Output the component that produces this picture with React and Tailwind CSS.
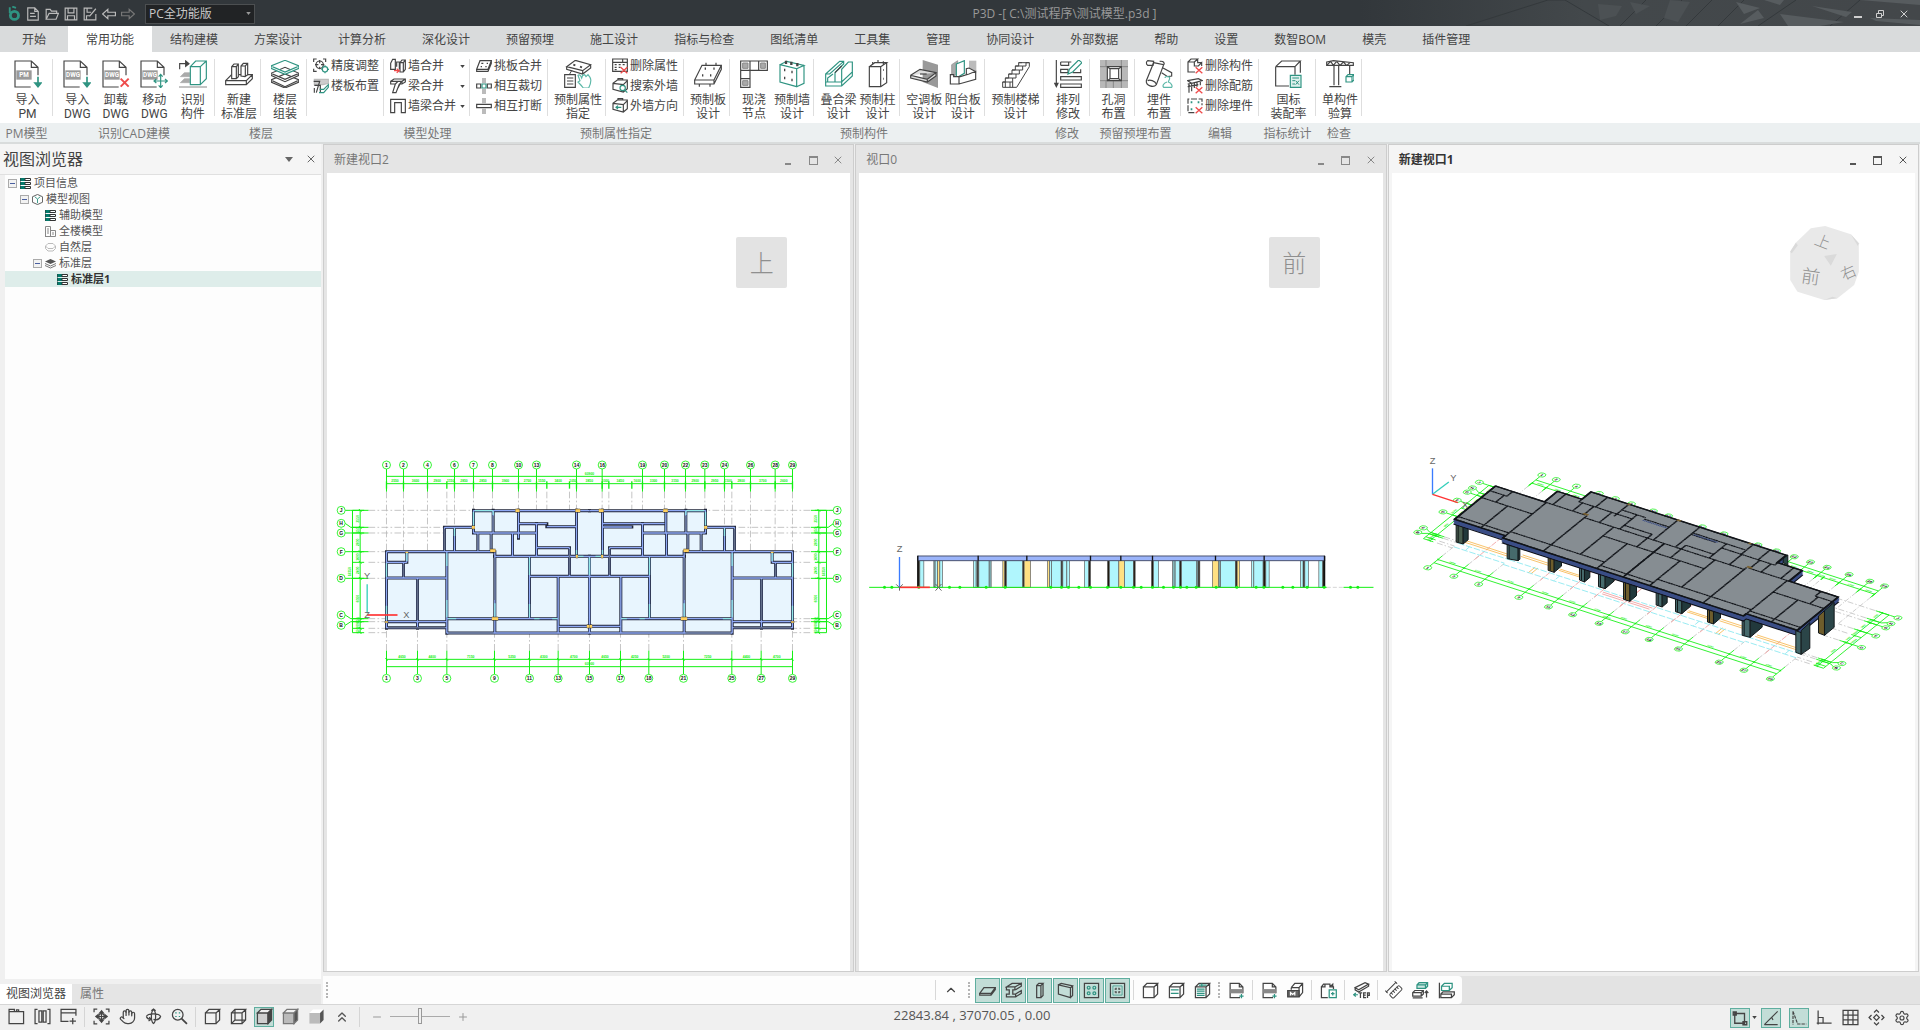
import React, { useState } from "react";
import {
  ChevronUp,
  ChevronsUp,
  Hand,
  Minus,
  Plus,
  RulerDimensionLine,
  Settings,
  X,
} from "lucide-react";

const INK = "#444444";
const TEAL = "#2f9482";
const RED = "#ee4b4b";

/* ---------- icons: large ones on an 84 grid, small ones on 48 ---------- */

const Big = ({ children }) => (
  <svg viewBox="0 0 84 84" className="size-7 shrink-0" fill="none" stroke={INK} strokeWidth="3.5">
    {children}
  </svg>
);

const Small = ({ children, className = "size-4" }) => (
  <svg viewBox="0 0 48 48" className={`${className} shrink-0`} fill="none" stroke={INK} strokeWidth="3.5">
    {children}
  </svg>
);

const Sheet = ({ label, children }) => (
  <Big>
    <path d="M50 81H3V3H52L72 22V46M52 3V22H72" />
    <rect x="7" y="31" width="46" height="28" fill="#9a9a9a" stroke="none" />
    <text x="30" y="52" textAnchor="middle" fontSize="19" fontWeight="700" fill="#fff" stroke="none" className="font-['Roboto',sans-serif]">
      {label}
    </text>
    {children}
  </Big>
);

const downArrow = (
  <path d="M72 50V79M63 69L72 80L81 69Z" stroke={TEAL} fill={TEAL} strokeWidth="5" />
);

const bigIcons = {
  importPm: <Sheet label="PM">{downArrow}</Sheet>,
  importDwg: <Sheet label="DWG">{downArrow}</Sheet>,
  unloadDwg: (
    <Sheet label="DWG">
      <path d="M56 56L80 80M80 56L56 80" stroke={RED} strokeWidth="6" />
    </Sheet>
  ),
  moveDwg: (
    <Sheet label="DWG">
      <path d="M62 44V82M43 63H81M56 50L62 43L68 50M56 76L62 83L68 76M49 57L42 63L49 69M75 57L82 63L75 69" stroke={TEAL} />
    </Sheet>
  ),
  recognise: (
    <Big>
      <path d="M2 28V11H24" />
      <path d="M20 3L30 11L20 19Z" fill={INK} />
      <path d="M4 50L16 38H32V50ZM4 68L16 56H32V68Z" fill="#aaa" stroke="#aaa" strokeWidth="2" />
      <path d="M34 20H64V74H34ZM34 20L50 3H82L64 20M82 3V56L64 74" fill="#fff" stroke={TEAL} />
      <path d="M0 81H84" stroke="#888" strokeWidth="3" />
    </Big>
  ),
  newFloor: (
    <Big>
      <path d="M2 62L20 44H82L64 62ZM2 62V74H64L82 56V44M64 62V74" />
      <path d="M20 56V20L27 12H40V50L34 56ZM20 20H34L40 12M34 20V56M48 48V18L55 10H68V44L60 50ZM48 18H61L68 10M61 18V48" fill="#fff" />
    </Big>
  ),
  stackFloor: (
    <Big>
      <path d="M0 60L42 42L84 60L42 80ZM0 60V66L42 84L84 66V60" fill="#fff" />
      <path d="M0 40L42 22L84 40L42 58ZM0 40V46L42 65L84 46V40" fill="#fff" />
      <path d="M0 18L42 1L84 18L42 36ZM0 18V25L42 43L84 25V18" stroke={TEAL} fill="#fff" />
    </Big>
  ),
  assign: (
    <Big>
      <path d="M8 20L34 1L80 14L56 32ZM8 20V28L56 42L80 24V14M56 32V42" />
      <path d="M28 14L34 16M48 20L54 22" strokeWidth="6" />
      <path d="M24 30L16 44" strokeWidth="3" />
      <path d="M2 44H34V82H2ZM9 54H28M9 63H28M9 72H28" />
      <path d="M42 46C46 42 50 46 53 54L56 46L62 44L66 50L72 44L78 52C84 62 80 72 74 84H58C52 76 46 70 42 66L48 62Z" stroke="#5cb8a8" fill="#fff" />
    </Big>
  ),
  slab: (
    <Big>
      <path d="M2 60L24 16H82L60 60ZM2 60V72H60L82 28V16M60 60V72" />
      <path d="M32 26H36M58 26H62M24 46H28M48 46H52" strokeWidth="7" />
      <path d="M36 16V8M66 16V8M16 72V80M48 72V80" />
    </Big>
  ),
  joint: (
    <Big>
      <path d="M2 3H82V31H30V82H2ZM2 31H30V3M56 3V31M2 56H30" />
      <path d="M8 9H24V25H8ZM62 9H76V25H62ZM8 62H24V76H8Z" fill="#aaa" stroke="#888" strokeWidth="3" />
    </Big>
  ),
  wall: (
    <Big>
      <path d="M6 14L56 26V80L6 66ZM6 14L26 4L78 16L56 26M78 16V70L56 80" stroke={TEAL} />
      <path d="M24 12V2M40 15V5M58 19V9M18 30H22M40 36H44M18 54H22M40 60H44" strokeWidth="7" />
    </Big>
  ),
  beam: (
    <Big>
      <path d="M2 42L44 4H56V12L30 38V66H2ZM30 66H50L82 36V6H70L50 28V66M2 42H14L56 4M8 66V54L24 42" stroke={TEAL} />
      <path d="M2 66V78H50L82 48V36M50 66V78" stroke={TEAL} />
      <path d="M30 38L50 18" />
    </Big>
  ),
  column: (
    <Big>
      <path d="M16 20H50V80H16ZM16 20L32 8H68L50 20M68 8V68L50 80M26 14V6M42 8V0M58 14V4" />
      <path d="M58 30H60M58 56H60" strokeWidth="6" />
    </Big>
  ),
  acSlab: (
    <Big>
      <path d="M38 0L84 14V84L38 66Z" fill="#999" stroke="none" />
      <path d="M2 46L30 28L78 38L52 58ZM2 46V54L52 66L78 48V38M52 58V66" fill="#ddd" />
      <path d="M30 42H50" />
    </Big>
  ),
  balcony: (
    <Big>
      <path d="M8 14L26 2V40L8 54Z" fill="#aaa" stroke="#888" strokeWidth="2" />
      <path d="M60 2H82V40H60Z" fill="#bbb" stroke="none" />
      <path d="M22 12L46 2V40L22 54Z" stroke={TEAL} fill="#fff" />
      <path d="M4 44V72H30L80 58V34L60 42L34 50H14V44ZM30 72V50M52 44V26L60 24L78 34" fill="#fff" />
    </Big>
  ),
  stairs: (
    <Big>
      <path d="M2 82V66H10V54H20V42H30V30H40V18H50V8H60" strokeWidth="3" />
      <path d="M24 82V66H32V54H42V42H52V30H62V18H72V8H82V20L44 82" strokeWidth="3" />
      <path d="M2 66H24M10 54H32M20 42H42M30 30H52M40 18H62M50 8H82M2 82H44M10 66V82M32 66V82" strokeWidth="3" />
    </Big>
  ),
  arrange: (
    <Big>
      <path d="M7 0V76M2 70L7 80L12 70ZM20 6H52M20 16H44V6M20 6V16M20 28H42V38H20ZM56 38H80V28M20 50H82V60H20ZM20 72H82V82H20Z" />
      <path d="M42 42L46 28L74 0L84 8L56 36Z" stroke={TEAL} fill="#fff" />
    </Big>
  ),
  opening: (
    <Big>
      <path d="M0 0H84V84H0Z" fill="#b8b8b8" stroke="none" />
      <path d="M18 0V20M64 0V20M0 20H84M0 62H84M18 62V84M64 62V84M40 62V84" stroke="#888" strokeWidth="3" />
      <path d="M22 20H64V62H22Z" fill="#fff" />
      <path d="M30 26H56V56H30ZM22 20L30 26M64 20L56 26M22 62L30 56M64 62L56 56" />
    </Big>
  ),
  embed: (
    <Big>
      <path d="M26 8L56 14L34 74C26 84 2 78 4 62Z" fill="#fff" />
      <path d="M8 2L26 4L24 16L8 16C2 12 4 4 8 2ZM54 24L80 38V48L68 50L50 38M44 4C56 2 60 10 56 14" />
      <path d="M8 62C14 58 30 62 34 72" />
      <path d="M60 54C60 48 74 48 74 54C74 60 70 62 70 66C82 70 82 80 80 82H56C52 78 54 70 66 66" stroke="#5cb8a8" />
    </Big>
  ),
  rate: (
    <Big>
      <path d="M2 20H60V44M2 20V78H42M2 20L20 3H76L60 20M76 3V38" />
      <path d="M46 46H78V82H46Z" stroke={TEAL} fill="#dff1ed" />
      <path d="M52 54H72M52 62H60M52 72H60M62 62L72 74M72 62L62 74" stroke={TEAL} strokeWidth="3" />
    </Big>
  ),
  crane: (
    <Big>
      <path d="M2 6L22 2L82 8V16H2ZM2 16L14 4L22 16L32 4L42 16L52 6L62 16L72 8M24 18V76M38 18V76M10 80H46" />
      <path d="M71 16V44" stroke={INK} />
      <path d="M60 50L66 44H84V60L78 66H60ZM60 50H78V66M78 50L84 44" stroke={TEAL} />
    </Big>
  ),
};

const cross = <path d="M26 28L46 46M46 28L26 46" stroke={RED} strokeWidth="4" />;

const smallIcons = {
  precision: (
    <Small>
      <path d="M2 12V3H11M30 3H38V12M2 32V40H11M20 6V16M20 26V34M6 20H16M24 20H34" />
      <circle cx="20" cy="20" r="11" />
      <circle cx="36" cy="34" r="8" stroke={TEAL} />
      <path d="M36 22V27M36 41V46M25 34H28M44 34H48" stroke={TEAL} />
    </Small>
  ),
  floorLay: (
    <Small>
      <path d="M4 4H46V16L30 20H4Z" fill="#ccc" stroke="#bbb" />
      <path d="M2 10H20L10 44M4 22H22V44M4 30V44" />
      <path d="M20 34H32L46 20V28L32 44H18" stroke={TEAL} />
    </Small>
  ),
  wallMerge: (
    <Small>
      <path d="M2 16L8 4H16V34H2ZM20 26V12H28V34M30 14L36 6H46V34L40 42H30ZM30 14H40V42M40 14L46 6" />
      <path d="M12 38H28M20 32L28 38L20 44" stroke={RED} />
    </Small>
  ),
  beamMerge: (
    <Small>
      <path d="M2 10L12 3H46V12L36 18H28L18 44H8L16 18H2ZM2 10H36L46 3M16 18L24 10M24 30L34 10M36 10V18" />
    </Small>
  ),
  wallBeam: (
    <Small>
      <path d="M2 44V4H46V44H34V14H14V44Z" />
    </Small>
  ),
  slabMerge: (
    <Small>
      <path d="M2 34L12 8H46L36 34ZM2 34V40H36L46 16V8" />
      <path d="M16 16H22M32 16H36M14 26H18M28 26H32" />
    </Small>
  ),
  cut: (
    <Small>
      <path d="M18 0H30V16H18ZM18 32H30V48H18Z" fill="#bbb" stroke="none" />
      <path d="M2 18H14V30H2ZM34 18H46V30H34Z" />
      <path d="M18 18H30V30H18Z" stroke={TEAL} />
    </Small>
  ),
  split: (
    <Small>
      <path d="M18 0H30V16H18ZM18 32H30V48H18Z" fill="#bbb" stroke="none" />
      <path d="M2 19H46V29H2Z" />
    </Small>
  ),
  delProp: (
    <Small>
      <path d="M2 3H46V40H2ZM2 13H46M32 3V13" />
      <path d="M8 20H14M20 20H26M32 20H38M8 28H14M20 28H26M8 35H14" />
      {cross}
    </Small>
  ),
  findWall: (
    <Small>
      <path d="M3 16L16 6H46V32L34 42L3 34ZM3 16L34 20L46 8M34 20V42M18 6V2H32V6" />
      <circle cx="32" cy="30" r="8" stroke={TEAL} fill="#fff" />
      <path d="M38 36L46 44" stroke={TEAL} />
    </Small>
  ),
  wallDir: (
    <Small>
      <path d="M3 16L16 6H46V32L34 42L3 34ZM3 16L34 20L46 8M34 20V42M18 6V2H32V6" />
      <path d="M12 28H28M18 23L12 28L18 33" stroke={TEAL} />
    </Small>
  ),
  delMember: (
    <Small>
      <path d="M24 42H3V12H22V24H34L44 14V24M3 12L12 3H32L22 12M32 3V14H44" />
      {cross}
    </Small>
  ),
  delRebar: (
    <Small>
      <path d="M2 8L34 2L46 8L14 16ZM2 18L34 12M2 26L34 20M6 16V44M14 16V40M22 14V30M30 12V26M40 8V22" />
      {cross}
    </Small>
  ),
  delEmbed: (
    <Small>
      <path d="M22 44H3V3H45V22" strokeDasharray="18 5" />
      <path d="M11 13H16M32 13H37M11 34H16" stroke={TEAL} strokeWidth="6" />
      {cross}
    </Small>
  ),
};

/* ---------- ribbon ---------- */

const tabs = [
  "常用功能", "结构建模", "方案设计", "计算分析", "深化设计", "预留预埋", "施工设计", "指标与检查", "图纸清单",
  "工具集", "管理", "协同设计", "外部数据", "帮助", "设置", "数智BOM", "模壳", "插件管理",
];

const ribbonGroups = [
  {
    title: "PM模型",
    cells: [{ w: "w-[53px]", big: [["importPm", "导入", "PM"]] }],
  },
  {
    title: "识别CAD建模",
    cells: [
      {
        w: "w-[162px]",
        big: [
          ["importDwg", "导入", "DWG"],
          ["unloadDwg", "卸载", "DWG"],
          ["moveDwg", "移动", "DWG"],
          ["recognise", "识别", "构件"],
        ],
      },
    ],
  },
  {
    title: "楼层",
    cells: [
      { w: "w-[46px]", big: [["newFloor", "新建", "标准层"]] },
      { w: "w-[46px]", big: [["stackFloor", "楼层", "组装"]] },
    ],
  },
  {
    title: "模型处理",
    cells: [
      { w: "w-[77px]", rows: [["precision", "精度调整"], ["floorLay", "楼板布置"]] },
      {
        w: "w-[86px]",
        menu: true,
        rows: [["wallMerge", "墙合并"], ["beamMerge", "梁合并"], ["wallBeam", "墙梁合并"]],
      },
      { w: "w-[78px]", rows: [["slabMerge", "挑板合并"], ["cut", "相互裁切"], ["split", "相互打断"]] },
    ],
  },
  {
    title: "预制属性指定",
    cells: [
      { w: "w-[58px]", big: [["assign", "预制属性", "指定"]] },
      { w: "w-[78px]", rows: [["delProp", "删除属性"], ["findWall", "搜索外墙"], ["wallDir", "外墙方向"]] },
    ],
  },
  {
    title: "预制构件",
    cells: [
      { w: "w-[46px]", big: [["slab", "预制板", "设计"]] },
      { w: "w-[84px]", big: [["joint", "现浇", "节点"], ["wall", "预制墙", "设计"]] },
      { w: "w-[86px]", big: [["beam", "叠合梁", "设计"], ["column", "预制柱", "设计"]] },
      { w: "w-[85px]", big: [["acSlab", "空调板", "设计"], ["balcony", "阳台板", "设计"]] },
      { w: "w-[59px]", big: [["stairs", "预制楼梯", "设计"]] },
    ],
  },
  { title: "修改", cells: [{ w: "w-[46px]", big: [["arrange", "排列", "修改"]] }] },
  {
    title: "预留预埋布置",
    cells: [
      { w: "w-[45px]", big: [["opening", "孔洞", "布置"]] },
      { w: "w-[46px]", big: [["embed", "埋件", "布置"]] },
    ],
  },
  {
    title: "编辑",
    cells: [{ w: "w-[78px]", rows: [["delMember", "删除构件"], ["delRebar", "删除配筋"], ["delEmbed", "删除埋件"]] }],
  },
  { title: "指标统计", cells: [{ w: "w-[57px]", big: [["rate", "国标", "装配率"]] }] },
  { title: "检查", cells: [{ w: "w-[46px]", big: [["crane", "单构件", "验算"]] }] },
];

const RibbonCell = ({ cell }) => (
  <div className={`${cell.w} flex shrink-0`}>
    {cell.big ? (
      <div className="flex flex-1 pl-[5px] pr-0.5">
        {cell.big.map(([icon, top, bottom]) => (
          <button
            key={icon}
            className="flex flex-1 flex-col items-center gap-[5px] whitespace-nowrap pt-2 font-['Roboto','Noto_Sans_CJK_SC',sans-serif] leading-[14px]"
          >
            {bigIcons[icon]}
            <span>
              {top}
              <br />
              {bottom}
            </span>
          </button>
        ))}
      </div>
    ) : (
      <div className="flex flex-1 flex-col pl-1.5 pt-1">
        {cell.rows.map(([icon, label]) => (
          <button key={icon} className="flex h-5 items-center gap-0.5 whitespace-nowrap pr-1">
            {smallIcons[icon]}
            {label}
            {cell.menu && (
              <svg viewBox="0 0 6 4" className="ml-auto h-[3px] w-[5px]">
                <path d="M0 0H6L3 4Z" fill={INK} />
              </svg>
            )}
          </button>
        ))}
      </div>
    )}
    <div className="my-[7px] w-px bg-[#dedede]" />
  </div>
);

const Ribbon = () => (
  <div className="flex shrink-0 border-b-2 border-[#d9dcdc] bg-white">
    {ribbonGroups.map((group) => (
      <section key={group.title} className="shrink-0">
        <div className="flex h-[71px]">
          {group.cells.map((cell, i) => (
            <RibbonCell key={i} cell={cell} />
          ))}
        </div>
        <h3 className="h-[19px] whitespace-nowrap bg-[#ecf0f1] text-center leading-[22px] text-[#777]">{group.title}</h3>
      </section>
    ))}
    <div className="flex flex-1 flex-col justify-end">
      <div className="h-[19px] bg-[#ecf0f1]" />
    </div>
  </div>
);

/* ---------- title bar ---------- */

const titleIcons = [
  ["新建", <path key="p" d="M6 3H30L42 15V45H6ZM30 3V15H42M14 22H30M14 32H34" />],
  ["打开", <path key="p" d="M4 42V8H18L22 14H40V22M4 42L14 22H46L38 42Z" />],
  ["保存", <path key="p" d="M4 4H44V44H4ZM14 4V20H34V4M12 44V30H36V44" />],
  ["另存为", <path key="p" d="M32 4H4V44H44V24M14 4V18H28M12 44V30H24M22 32L44 6" />],
  ["撤销", <path key="p" d="M2 24L20 8V18H46V30H20V40Z" />],
];

const TitleBar = () => (
  <header className="relative flex h-[26px] shrink-0 items-center overflow-hidden bg-[#32373b] pt-px text-[#999]">
    <svg viewBox="0 0 560 26" preserveAspectRatio="xMaxYMid slice" className="absolute right-0 top-0 h-full w-[560px]">
      <defs>
        <linearGradient id="sky" x1="0" x2="1">
          <stop offset="0" stopColor="#32373b" />
          <stop offset=".4" stopColor="#43484b" />
          <stop offset="1" stopColor="#43474a" />
        </linearGradient>
      </defs>
      <path d="M0 0H560V26H0Z" fill="url(#sky)" />
      <path d="M130 26L106 26L188 0H205L249 26M260 26L286 0M296 26L322 0M326 26L352 0M358 26L384 0M398 26L436 0M470 26L500 0" stroke="#34393c" fill="none" />
      <path d="M238 4L262 6L256 16L240 20ZM270 2L290 6L276 14ZM310 0L330 2L318 22L304 18Z" fill="#4c5154" />
      <path d="M376 2L400 8L384 14ZM398 10L404 18L380 24ZM420 14L484 22L460 26H428ZM452 6L492 12L486 17ZM404 0H424L420 5ZM510 18L560 20V25L516 21ZM500 0H560V5Z" fill="#575c5f" />
    </svg>
    <div className="relative flex items-center gap-[5px] pl-1.5">
      <svg viewBox="0 0 48 48" className="size-[15px]" fill="none" stroke={TEAL} strokeWidth="9">
        <circle cx="27" cy="30" r="13" />
        <path d="M12 4V22M20 2L32 6" strokeWidth="6" />
      </svg>
      {titleIcons.map(([label, path]) => (
        <button key={label} aria-label={label}>
          <svg viewBox="0 0 48 48" className="size-[14px]" fill="none" stroke="#bbb" strokeWidth="4">
            {path}
          </svg>
        </button>
      ))}
      <button aria-label="重做">
        <svg viewBox="0 0 48 48" className="size-[14px]" fill="none" stroke="#777" strokeWidth="4">
          <path d="M46 24L28 8V18H2V30H28V40Z" />
        </svg>
      </button>
    </div>
    <div className="relative ml-2.5">
      <select
        aria-label="功能版本"
        className="h-5 w-[110px] appearance-none border border-[#4c4f51] bg-[#212325] pl-[3px] text-xs leading-4 text-[#c8c8c8]"
      >
        <option>PC全功能版</option>
      </select>
      <svg viewBox="0 0 6 4" className="pointer-events-none absolute right-1 top-2 h-[3px] w-[5px]">
        <path d="M0 0H6L3 4Z" fill="#999" />
      </svg>
    </div>
    <h1 className="relative flex-1 pl-5 text-center">P3D -[ C:\测试程序\测试模型.p3d ]</h1>
    <div className="relative flex items-center gap-[14px] pr-2.5 text-[#d0d0d0]">
      <button aria-label="最小化" className="h-2 w-2 border-b-2" />
      <button aria-label="还原">
        <svg viewBox="0 0 8 8" className="size-2" fill="none" stroke="currentColor">
          <path d="M.5 3.5H5.5V7.5H.5ZM2.5 3V.5H7.5V5.5H6" />
        </svg>
      </button>
      <button aria-label="关闭">
        <X className="size-3" />
      </button>
    </div>
  </header>
);

/* ---------- left browser panel ---------- */

const Stack = () => (
  <svg viewBox="0 0 11 11" className="size-[11px]">
    <path d="M0 0H5V3H0ZM0 4H5V7H0ZM0 8H5V11H0Z" fill="#067a6c" />
    <path d="M0 0V11M5 .5H10.5V2.5H5ZM5 4.5H10.5V6.5H5ZM5 8.5H10.5V10.5H5Z" fill="#fff" stroke="#333" />
  </svg>
);

const treeIcons = {
  stack: <Stack />,
  cube: (
    <svg viewBox="0 0 12 12" className="size-[11px]" fill="none" stroke="#555">
      <path d="M6 .5L11.5 3V9L6 11.5L.5 9V3Z" />
      <path d="M3 3L6 5.5L9 3M6 5.5V10" stroke={TEAL} />
    </svg>
  ),
  tower: (
    <svg viewBox="0 0 11 11" className="size-[11px]" fill="none" stroke="#888">
      <path d="M.5 10.5V.5H5.5V10.5ZM5.5 4.5H10.5V10.5H0M2 3H4M2 5H4M2 7H4M8 6V9" />
    </svg>
  ),
  hex: (
    <svg viewBox="0 0 11 11" className="size-[11px]" fill="none" stroke="#bbb">
      <path d="M3 1.5H8L10.5 4L8 6.5H3L.5 4ZM.5 4V6.5L3 9H8L10.5 6.5V4" />
    </svg>
  ),
  layers: (
    <svg viewBox="0 0 11 11" className="size-[11px]">
      <path d="M0 3.5L5.5 1L11 3.5L5.5 6Z" fill="#555" />
      <path d="M0 5.5L5.5 8L11 5.5M0 7.5L5.5 10L11 7.5" fill="none" stroke="#777" />
    </svg>
  ),
};

const treeRows = [
  { pad: "pl-[3px]", icon: "stack", label: "项目信息", open: true },
  { pad: "pl-[15px]", icon: "cube", label: "模型视图", open: true },
  { pad: "pl-[28px]", icon: "stack", label: "辅助模型" },
  { pad: "pl-[28px]", icon: "tower", label: "全楼模型" },
  { pad: "pl-[28px]", icon: "hex", label: "自然层" },
  { pad: "pl-[28px]", icon: "layers", label: "标准层", open: true },
  { pad: "pl-[40px]", icon: "stack", label: "标准层1", selected: true },
];

const Browser = () => (
  <aside className="flex w-[321px] shrink-0 flex-col bg-[#f0f0f0]">
    <div className="flex h-[31px] shrink-0 items-center gap-2 border-b border-[#e0e0e0] bg-[#f5f5f5] pl-[3px] pr-1">
      <h2 className="flex-1 text-base text-[#444]">视图浏览器</h2>
      <button aria-label="面板菜单" className="px-1">
        <svg viewBox="0 0 8 5" className="h-[5px] w-2">
          <path d="M0 0H8L4 5Z" fill="#666" />
        </svg>
      </button>
      <button aria-label="关闭面板">
        <X className="size-3 text-[#666]" />
      </button>
    </div>
    <ul className="mb-[5px] ml-[5px] flex-1 bg-[#fdfdfd] text-[11px] leading-4 text-[#555]">
      {treeRows.map((row) => (
        <li
          key={row.label}
          className={`flex h-4 items-center gap-[3px] ${row.pad} ${row.selected ? "bg-[#deedea] font-bold text-[#333]" : ""}`}
        >
          {row.open ? (
            <button aria-label="折叠" className="flex size-[9px] items-center border border-[#aaa] bg-[#f2f2f2] px-px">
              <span className="h-px w-full bg-[#4a5fa0]" />
            </button>
          ) : (
            <span className="w-[9px]" />
          )}
          {treeIcons[row.icon]}
          <span>{row.label}</span>
        </li>
      ))}
    </ul>
    <div className="flex h-5 shrink-0 bg-[#e5e5e5]">
      <button className="bg-white px-1.5">视图浏览器</button>
      <button className="px-2 text-[#777]">属性</button>
    </div>
  </aside>
);

/* ---------- drawings ---------- */

const topAxes = [
  [199, 1], [250, 2], [322, 4], [403, 6], [460, 7], [517, 8], [595, 10], [649, 13], [769, 14],
  [846, 16], [967, 19], [1033, 20], [1096, 22], [1154, 23], [1213, 24], [1291, 26], [1365, 28], [1417, 29],
];
const topTicks = [
  199, 250, 322, 380, 403, 460, 517, 595, 649, 680, 748, 769, 846, 866, 935, 967, 1033, 1096, 1154, 1213, 1235,
  1291, 1365, 1417,
];
const bottomAxes = [
  [199, 1], [292, 3], [380, 5], [523, 9], [628, 11], [714, 13], [808, 15], [901, 17], [986, 18], [1090, 21],
  [1235, 25], [1323, 27], [1417, 29],
];
const sideAxes = [
  [211, 211, "J"], [250, 262, "H"], [279, 279, "G"], [335, 335, "F"], [415, 415, "D"], [525, 536, "C"], [556, 545, "B"],
];
const sideTicks = [211, 262, 279, 335, 367, 415, 536, 545, 565, 578];

const GREEN = "#12f012";

const Bubble = ({ x, y, label }) => (
  <>
    <circle cx={x} cy={y} r="12" fill="#fff" stroke={GREEN} strokeWidth="2.5" />
    <text x={x} y={y + 6} textAnchor="middle" fontSize="15" fontWeight="700" fill="#111">
      {label}
    </text>
  </>
);

const between = (ticks) => ticks.slice(1).map((t, i) => [(t + ticks[i]) / 2, t - ticks[i]]);

// Axis grid with bubbles and dimension chains
const AxisGrid = () => (
  <g>
    <g stroke="#b9b9b9" strokeWidth="2.5" strokeDasharray="20 7 5 7">
      {topTicks.map((x) => (
        <path key={x} d={`M${x} 155V${x < 373 || x > 1242 ? 335 : x < 460 || x > 1154 ? 262 : 211}`} />
      ))}
      {bottomAxes.map(([x]) => (
        <path key={x} d={`M${x} 632V570`} />
      ))}
      {sideTicks.map((y) => (
        <path key={y} d={`M145 ${y}H${y < 250 ? 460 : y < 330 ? 373 : 199}M1470 ${y}H${y < 250 ? 1154 : y < 330 ? 1242 : 1417}`} />
      ))}
    </g>
    <g stroke={GREEN} strokeWidth="3" fill="none">
      <path d="M199 109H1417M199 131H1417M199 658H1417M199 680H1417M97 211V578M120 211V578M1496 211V578M1519 211V578" />
      {topAxes.map(([x]) => (
        <path key={x} d={`M${x} 86V155`} />
      ))}
      {topTicks.map((x) => (
        <path key={x} d={`M${x} 124V146`} strokeWidth="4" />
      ))}
      {bottomAxes.map(([x]) => (
        <path key={x} d={`M${x} 632V703M${x - 3} 654L${x + 3} 662`} />
      ))}
      {sideAxes.map(([y, to]) => (
        <path key={y} d={`M75 ${y}L92 ${to}H145M1541 ${y}L1524 ${to}H1472`} />
      ))}
      {sideTicks.map((y) => (
        <path key={y} d={`M97 ${y}H132M116 ${y - 4}L124 ${y + 4}M1484 ${y}H1519M1492 ${y - 4}L1500 ${y + 4}`} />
      ))}
    </g>
    <g fill={GREEN} fontSize="10" fontWeight="700" textAnchor="middle">
      {between(topTicks).map(([x, d]) => (
        <text key={x} x={x} y="127">{d * 50}</text>
      ))}
      {between(bottomAxes.map(([x]) => x)).map(([x, d]) => (
        <text key={x} x={x} y="654">{d * 50}</text>
      ))}
      {between(sideTicks).map(([y, d]) => (
        <g key={y}>
          <text transform={`translate(116 ${y}) rotate(-90)`}>{d * 50}</text>
          <text transform={`translate(1492 ${y}) rotate(-90)`}>{d * 50}</text>
        </g>
      ))}
      <text x="808" y="105">60900</text>
      <text x="808" y="676">60900</text>
      <text transform="translate(93 395) rotate(-90)">18350</text>
      <text transform="translate(1515 395) rotate(-90)">18350</text>
    </g>
    {topAxes.map(([x, n]) => (
      <Bubble key={x} x={x} y={75} label={n} />
    ))}
    {bottomAxes.map(([x, n]) => (
      <Bubble key={x} x={x} y={715} label={n} />
    ))}
    {sideAxes.map(([y, , n]) => (
      <g key={y}>
        <Bubble x={63} y={y} label={n} />
        <Bubble x={1551} y={y} label={n} />
      </g>
    ))}
  </g>
);

const OUTLINE =
  "M199 335H373V262H460V211H1154V262H1242V335H1417V565H1235V580H380V565H199Z";

// West half of the walls; the east half mirrors it about x = 808
const HALF_WALLS =
  "M460 212H808M373 262H460M460 279H649M199 335H517M649 323H748M523 349H808M199 367H260" +
  "M628 409H808M199 414H380M380 536H714M199 545H380M199 563H380M380 579H808M714 559H808" +
  "M199 335V565M380 335V580M373 262V335M403 262V335M460 211V279M519 211V279M473 279V335M513 279V335" +
  "M524 335V578M577 279V349M649 251V349M260 335V367M250 367V414M292 414V565M628 349V536M714 409V578M748 323V409" +
  "M769 211V349M808 349V578";
// Walls around the two upper bays, which are not symmetric
const BAY_WALLS = "M595 211V295M595 251H680M680 260H769M1037 211V279M847 251H1033M847 261H935";
const HALF_CYAN =
  "M199 370V410M199 497V540M380 340V378M380 480V532M464 212H518M403 265V288M460 216V258M519 214V225M628 353V405" +
  "M628 492V532M524 490V532M808 353V405M384 536H408M642 536H658M696 536H712M770 349H790M260 339V363M769 330V345";
const HALF_GREY = "M292 418V541M473 283V332M250 371V410M373 266V331M513 283V330M203 563H376M748 327V405M519 228V275M524 353V480M384 579H520";
const HALF_GOLD = "M766 212H780M510 332H526M515 536H534M455 262H464M800 559H808M199 544V548M767 349H773M260 335V339";
const BAY_GOLD = "M586 212H598M1029 212H1043";

const Both = ({ children }) => (
  <>
    {children}
    <g transform="translate(1616 0) scale(-1 1)">{children}</g>
  </>
);

const PlanDrawing = () => (
  <g transform="translate(320 440) scale(.33333)">
    <AxisGrid />
    <path d={OUTLINE} fill="#e8f5fe" />
    <g fill="none">
      <g stroke="#20263a" strokeWidth="9" strokeLinecap="square">
        <Both>
          <path d={HALF_WALLS} />
        </Both>
        <path d={BAY_WALLS} />
      </g>
      <g stroke="#8fa9f5" strokeWidth="4">
        <Both>
          <path d={HALF_WALLS} />
        </Both>
        <path d={BAY_WALLS} />
      </g>
      <Both>
        <path d={HALF_GREY} stroke="#64708c" strokeWidth="4" />
        <path d={HALF_CYAN} stroke="#93e8ea" strokeWidth="4" />
        <path d={HALF_GOLD} stroke="#3a3320" strokeWidth="11" />
        <path d={HALF_GOLD} stroke="#ffcf5e" strokeWidth="8" />
      </Both>
      <path d={BAY_GOLD} stroke="#3a3320" strokeWidth="11" />
      <path d={BAY_GOLD} stroke="#ffcf5e" strokeWidth="8" />
    </g>
    <path d="M141 433V520" stroke="#35cfbb" strokeWidth="4" />
    <path d="M141 525H232" stroke="#f33" strokeWidth="5" />
    <g fill="#666" fontSize="28" textAnchor="middle">
      <text x="141" y="417">Y</text>
      <text x="141" y="535">Z</text>
      <text x="259" y="535">X</text>
    </g>
  </g>
);

// [x, width, kind] of everything standing between ground and beam
const piers = [
  [173, 6, "k"], [179, 12, "c"], [221, 4, "g"], [225, 7, "c"], [232, 7, "y"], [239, 8, "c"], [340, 8, "c"], [348, 3, "c"],
  [351, 5, "k"], [356, 31, "c"], [387, 6, "g"], [428, 6, "y"], [434, 5, "k"], [439, 49, "c"], [488, 4, "k"], [492, 19, "y"],
  [562, 6, "y"], [568, 6, "c"], [574, 29, "c"], [603, 5, "k"], [608, 12, "c"], [620, 8, "c"], [673, 13, "c"], [686, 5, "k"],
  [742, 6, "k"], [748, 28, "c"], [776, 17, "y"], [793, 27, "c"], [820, 5, "k"], [874, 6, "k"], [880, 15, "c"], [937, 8, "g"],
  [945, 14, "c"], [959, 5, "k"], [964, 46, "c"], [1010, 4, "g"], [1014, 5, "k"], [1057, 19, "y"], [1076, 5, "g"],
  [1081, 45, "c"], [1126, 5, "k"], [1131, 7, "y"], [1174, 7, "c"], [1181, 28, "c"], [1209, 8, "k"], [1217, 10, "c"],
  [1321, 8, "c"], [1329, 5, "k"], [1334, 11, "c"], [1376, 12, "c"], [1388, 6, "k"],
];
const pierFill = { k: "#1f1a10", c: "#b0f6fd", g: "#82b4b8", y: "#ffe082" };
const groundDots = [
  73, 95, 176, 268, 299, 378, 435, 572, 604, 625, 656, 691, 742, 782, 820, 843, 877, 910, 940, 961, 980, 1008, 1068, 1130,
  1188, 1211, 1268, 1298, 1341, 1392, 1471, 1493,
];

const FrontDrawing = () => (
  <g transform="translate(860 520) scale(.33333)">
    {piers.map(([x, w, kind]) => (
      <rect key={x} x={x} y="122" width={w} height="80" fill={pierFill[kind]} stroke="#5a5a5a" strokeWidth="2" />
    ))}
    <path d="M172 108H1394V122H172Z" fill="#9bb4fa" stroke="#4a5270" strokeWidth="3" />
    <path d="M354 107V122M500 107V122M691 107V122M782 107V122M877 107V122M1066 107V122M1212 107V122M173 107V202M1393 107V202" stroke="#111" strokeWidth="4" />
    <path d="M27 202H1400M1450 202H1540" stroke={GREEN} strokeWidth="3" />
    <path d="M1400 202H1450" stroke="#ccc" strokeWidth="2.5" strokeDasharray="12 6" />
    {groundDots.map((x) => (
      <circle key={x} cx={x} cy="202" r="4.5" fill={GREEN} />
    ))}
    <path d="M118 111V202" stroke="#3a7bff" strokeWidth="4" />
    <path d="M118 202H209" stroke="#f33" strokeWidth="5" />
    <path d="M108 193L118 203L128 193M118 203V212M226 192L244 212M244 192L226 212" stroke="#666" strokeWidth="3" fill="none" />
    <text x="118" y="96" fontSize="28" fill="#666" textAnchor="middle">Z</text>
  </g>
);

// [x, width, side width, top, bottom, colour] for the columns seen below the slab edge
const columns = [
  [165, 21, 15, 245, 312, "#4a5f50"], [318, 33, 5, 300, 362, "#466a6c"], [441, 18, 22, 335, 397, "#6e5d2c"],
  [535, 15, 16, 365, 426, "#466a6c"], [592, 20, 27, 385, 446, "#466a6c"], [667, 19, 20, 410, 484, "#6e5d2c"],
  [765, 18, 15, 440, 501, "#466a6c"], [823, 19, 26, 455, 521, "#466a6c"], [919, 18, 21, 485, 552, "#6e5d2c"],
  [1023, 24, 36, 520, 592, "#466a6c"],
];

const ROOF = "matrix(.844 .2735 -.535 .435 294.3 -62.1)";

const ModelDrawing = () => (
  <g transform="translate(1400 440) scale(.33333)">
    <g transform="translate(0 80)">
      <g transform={ROOF}>
        <AxisGrid />
        <Both>
          <g fill="none" strokeWidth="3">
            <path d="M292 414V600M524 349V600M628 409V600M714 409V600M808 349V600" stroke="#f0a0a0" strokeDasharray="26 6" />
            <path d="M210 520H370M210 530H370M400 500H510M400 510H510M540 510H620M540 518H620M470 540V580M480 540V580" stroke="#f7b955" />
            <path d="M199 545H380M199 570H380M380 545H808M380 578H808M240 545V570M560 545V578" stroke="#8ae8f0" strokeDasharray="22 6" />
            <path d="M720 555H800M724 565H800" stroke="#f0a0a0" />
          </g>
        </Both>
      </g>
    </g>
    {columns.map(([x, w, side, top, bottom, fill]) => (
      <g key={x} stroke="#12181a" strokeWidth="3">
        <path d={`M${x} ${top}H${x + w}V${bottom}L${x} ${bottom - 6}Z`} fill={fill} />
        <path d={`M${x + w} ${top}H${x + w + side}V${bottom - side * 0.85}L${x + w} ${bottom}Z`} fill="#22393c" />
        <path d={`M${x + 6} ${top}V${bottom - 5}`} />
      </g>
    ))}
    {[15, 11, 7, 3].map((drop) => (
      <g key={drop} transform={`translate(0 ${drop})`}>
        <path d={OUTLINE} transform={ROOF} fill="#3b4e86" stroke={drop === 15 ? "#10131c" : "#3b4e86"} strokeWidth="6" />
      </g>
    ))}
    <g stroke="#12181a" strokeWidth="3">
      <path d="M1184 572L1200 578V643L1184 637Z" fill="#466a6c" />
      <path d="M1200 572L1226 548V625L1200 643Z" fill="#2b4548" />
      <path d="M1252 528L1270 512V586L1252 579Z" fill="#6e5d2c" />
      <path d="M1270 512L1299 487V562L1270 586Z" fill="#2b4548" />
      <path d="M1146 350L1160 345V375L1146 368Z" fill="#2b4548" />
    </g>
    <g transform={ROOF}>
      <path d={OUTLINE} fill="#868d92" stroke="#0e1114" strokeWidth="7" />
      <g fill="none" stroke="#12151a" strokeWidth="6" strokeDasharray="8 1">
        <Both>
          <path d={HALF_WALLS} />
        </Both>
        <path d={BAY_WALLS} />
      </g>
      <path d="M680 268H765M855 258H940" stroke="#3b4e86" strokeWidth="7" strokeDasharray="4 2" />
      <path d="M508 330H526M1090 330H1108M590 212H600M766 212H780M1020 212H1030" stroke="#7b6232" strokeWidth="9" />
    </g>
    <g strokeWidth="4">
      <path d="M94 85V163" stroke="#3a7bff" />
      <path d="M94 163L143 126" stroke="#35cfbb" />
      <path d="M94 163L170 188" stroke="#f33" />
    </g>
    <g fill="#666" fontSize="28" textAnchor="middle">
      <text x="94" y="73">Z</text>
      <text x="157" y="122">Y</text>
      <text x="192" y="205">X</text>
    </g>
  </g>
);

/* ---------- viewports ---------- */

const FlatCube = ({ face }) => (
  <button className="absolute right-[63px] top-16 flex size-[51px] items-center justify-center rounded-[2px] bg-[#e3e3e3] text-2xl font-light text-[#8f8f8f]">
    {face}
  </button>
);

const IsoCube = () => (
  <svg viewBox="270 75 212 228" className="absolute right-[55px] top-[52px] h-[76px] w-[71px]">
    <path d="M273 155L290 128L335 85L378 78L455 103L479 130V215L465 255L415 295L375 300L295 275L273 240Z" fill="#e9e9e9" />
    <path d="M375 168L413 162L395 197ZM273 155L290 128L296 136L278 160ZM375 300L400 290L415 295ZM455 103L479 130L476 138Z" fill="#dadada" />
    <g fill="#8f8f8f" fontWeight="300" textAnchor="middle">
      <text transform="translate(332 250) rotate(8)" fontSize="56">前</text>
      <text transform="translate(364 140) rotate(22)" fontSize="46">上</text>
      <text transform="translate(454 232) rotate(-24)" fontSize="46">右</text>
    </g>
  </svg>
);

const Viewport = ({ title, active, viewBox, cube, children }) => (
  <section
    className={`flex min-h-0 min-w-0 flex-col border border-[#cdcdcd] px-[3px] ${active ? "bg-[#f5f5f5]" : "bg-[#e5e5e5]"}`}
  >
    <div
      className={`flex h-7 shrink-0 items-center gap-[13px] pl-[7px] pr-1.5 pt-0.5 ${active ? "text-[#555]" : "text-[#888]"}`}
    >
      <h2 className={`flex-1 ${active ? "font-bold text-[#333]" : "text-[#777]"}`}>{title}</h2>
      <button aria-label="最小化" className="flex h-2.5 w-3 items-end justify-center">
        <span className="h-0.5 w-1.5 bg-current" />
      </button>
      <button aria-label="最大化" className="flex w-3 justify-center">
        <span className="size-[9px] border border-t-2 border-current" />
      </button>
      <button aria-label="关闭">
        <X className="size-3" />
      </button>
    </div>
    <div className="relative min-h-0 flex-1 bg-white">
      <svg viewBox={viewBox} className="absolute inset-0 h-full w-full font-['Liberation_Sans','Noto_Sans_CJK_SC',sans-serif]">
        {children}
      </svg>
      {cube}
    </div>
  </section>
);

/* ---------- component tool strip ---------- */

const boxPath = "M4 14H34V44H4ZM4 14L14 4H44L34 14M44 4V34L34 44";

const filterTools = [
  ["板", <path key="p" d="M2 32L14 16H46L34 32ZM2 32V37H34L46 21V16M34 32V37" />],
  ["梁", <path key="p" d="M4 14L20 4H46L28 14ZM4 14V22H12V34H4V42H30V34H22V22H28V14M28 14L46 4V12L30 22M30 34L46 24V32L30 42" />],
  ["柱", <path key="p" d="M16 10H28V44H16ZM16 10L22 4H34L28 10M34 4V38L28 44" />],
  ["墙", <path key="p" d="M4 8L38 16V44L4 34ZM4 8L12 4L44 11L38 16M44 11V38L38 44" />],
  [
    "孔洞",
    <g key="g">
      <path d="M4 4H44V44H4Z" />
      <g stroke={TEAL}>
        <circle cx="16" cy="16" r="4" />
        <circle cx="32" cy="16" r="4" />
        <circle cx="16" cy="32" r="4" />
        <circle cx="32" cy="32" r="4" />
      </g>
    </g>,
  ],
  [
    "钢筋",
    <g key="g">
      <path d="M4 4H44V44H4Z" />
      <path d="M11 11H37V37H11Z" stroke={TEAL} strokeWidth="2" />
      <path d="M16 20H20V16M28 16V20H32M16 28H20V32M28 32V28H32" />
    </g>,
  ],
];

const fileGlyph = (
  <>
    <path d="M34 44H6V4H32L42 14V32M32 4V14H42" />
    <path d="M6 20H42V32H6Z" fill="#888" stroke="none" />
    <path d="M38 34V46M32 40H44" stroke={TEAL} />
  </>
);

const stripTools = [
  ["实体", <path key="p" d={boxPath} />],
  ["分层", <g key="g"><path d={boxPath} /><path d="M8 22H30M8 32H30" stroke={TEAL} /></g>],
  ["网格", <g key="g"><path d={boxPath} /><path d="M8 20H30M8 26H30M8 32H30M8 38H30M14 9H36M22 4V14" stroke={TEAL} /></g>],
  "grip",
  ["导出文件", fileGlyph],
  "bar",
  ["导入文件", fileGlyph],
  ["模型文件", <g key="g"><path d="M12 16L22 4H44V30L34 42M12 16H34L44 4M34 16V42M12 16V22" /><path d="M2 24H34V42H2Z" fill="#666" /><path d="M10 38V30L16 35L22 30V38" stroke="#fff" /></g>],
  "bar",
  ["复制构件", <g key="g"><path d="M22 44H4V14H14V6H28V14H38V20M4 14L10 6H14M28 14L36 6V14" /><path d="M26 22H46V44H26ZM36 28V38M31 33H41" stroke={TEAL} /></g>],
  "bar",
  ["步骤", <g key="g"><path d="M6 16L34 2L44 6L16 22ZM6 16V22L16 28L44 12V6" /><path d="M2 36H14M8 31L2 36L8 41" stroke={TEAL} /><path d="M16 31H26M21 31V45M37 31H30V44H37M30 37H36M41 45V31H46V38H41" /></g>],
  "bar",
  ["测量", null],
  ["上移", <g key="g"><path d="M14 8L20 2H44V12L38 18H14ZM14 8H38V18M38 8L44 2" stroke={TEAL} fill="#cbe7e1" /><path d="M2 30L8 24H32V34L26 40H2ZM2 30H26V40M26 30L32 24M2 45H30M41 44V26M36 31L41 25L46 31" /></g>],
  ["对齐", <g key="g"><path d="M4 2V46" /><path d="M10 12L18 4H40V16L32 24H10ZM10 12H32V24" stroke={TEAL} /><path d="M8 34L14 28H46V36L38 44H8ZM8 34H38V44" /></g>],
];

const Grip = () => <span className="h-4 w-0 border-l-2 border-dotted border-[#b5b5b5]" />;
const Bar = () => <span className="mx-[3px] h-5 w-px bg-[#d8d8d8]" />;

const ToolStrip = () => (
  <div className="flex h-7 shrink-0 bg-[#e3e3e3]">
    <div className="flex w-[1139px] items-center rounded-r bg-[#fdfdfd] pl-[3px] pr-[3px]">
      <Grip />
      <span className="flex-1" />
      <Bar />
      <button aria-label="展开" className="flex w-6 justify-center">
        <ChevronUp className="size-3.5 text-[#444]" />
      </button>
      <span className="flex w-3 justify-center">
        <Grip />
      </span>
      <div className="flex gap-px">
        {filterTools.map(([label, glyph]) => (
          <button key={label} aria-label={label} className="flex h-[25px] w-[25px] items-center justify-center border border-[#5fae9f] bg-[#c2ddd7]">
            <Small className="size-[17px]">{glyph}</Small>
          </button>
        ))}
      </div>
      <Bar />
      {stripTools.map((tool, i) => {
        if (tool === "grip") return <span key={i} className="flex w-2 justify-center"><Grip /></span>;
        if (tool === "bar") return <Bar key={i} />;
        const [label, glyph] = tool;
        return (
          <button key={i} aria-label={label} className="flex w-[26px] justify-center">
            {glyph ? (
              <Small className="size-[17px]">{glyph}</Small>
            ) : (
              <RulerDimensionLine className="size-4 -rotate-45 text-[#444]" strokeWidth={1.5} />
            )}
          </button>
        );
      })}
    </div>
  </div>
);

/* ---------- status bar ---------- */

const solidBox = (front, top, side) => (
  <g>
    <path d="M4 14H34V44H4Z" fill={front} />
    <path d="M4 14L14 4H44L34 14Z" fill={top} />
    <path d="M34 14L44 4V34L34 44Z" fill={side} />
  </g>
);

const viewTools = [
  ["打开视图", <path key="p" d="M3 44V4H18V10H44V44ZM18 10H3M24 10V5H30V10" />],
  ["平铺", <path key="p" d="M14 8H22V40H14ZM26 8H34V40H26ZM3 12V4H10M38 4H45V12M3 36V44H10M38 44H45V36M3 12V36M45 12V36" />],
  ["新建视图", <path key="p" d="M24 38H3V4H45V22M3 14H45M36 28V46M27 37H45" />],
  "bar",
  ["缩放全图", <g key="g"><path d="M3 12V3H12M36 3H45V12M3 36V45H12M36 45H45V36M24 8V40M8 24H40M24 8L19 14H29ZM24 40L19 34H29ZM8 24L14 19V29ZM40 24L34 19V29Z" /><circle cx="24" cy="24" r="8" /></g>],
  "hand",
  ["旋转", <path key="p" d="M24 4C32 10 32 38 24 44C16 38 16 10 24 4ZM4 24C8 14 40 14 44 24C40 34 30 34 24 32M4 24C6 30 12 32 16 32M18 8L24 3L30 8M12 26L17 32L10 37" />],
  ["窗口缩放", <g key="g"><circle cx="19" cy="19" r="15" /><path d="M30 30L45 45" strokeWidth="5" /><path d="M12 14H16M22 14H26M12 24H16M22 24H26" stroke={TEAL} /></g>],
  "bar",
  ["线框", <path key="p" d={boxPath} />],
  ["透明", <path key="p" d={boxPath + "M14 4V34H44M14 34L4 44"} />],
  ["着色", solidBox("#cfcfcf", "#eee", "#444")],
  ["真实", <g key="g" stroke="#777">{solidBox("#bbb", "#f0f0f0", "#555")}</g>],
  ["渲染", <g key="g" stroke="none">{solidBox("#bbb", "#fff", "#555")}</g>],
];

const snapTools = [
  ["正交", <path key="p" d="M6 4V44M2 40H44M6 24H20V40" />],
  ["栅格", <path key="p" d="M3 4H45V44H3ZM17 4V44M31 4V44M3 17H45M3 31H45" />],
  ["捕捉", <path key="p" d="M24 16L32 24L24 32L16 24ZM17 10L24 3L31 10M17 38L24 45L31 38M10 17L3 24L10 31M38 17L45 24L38 31" />],
];

const StatusBar = () => {
  const [zoom, setZoom] = useState(50);

  return (
    <footer className="grid h-[26px] shrink-0 grid-cols-[1fr_auto_1fr] items-center border-t border-[#d6d6d6] bg-[#f0f0f0]">
      <div className="flex items-center pb-0.5 pl-[3px]">
        {viewTools.map((tool, i) => {
          if (tool === "bar") return <span key={i} className="mx-[3px] h-5 w-px bg-[#d5d5d5]" />;
          if (tool === "hand")
            return (
              <button key={i} aria-label="平移" className="flex w-[26px] justify-center">
                <Hand className="size-[17px] text-[#444]" strokeWidth={1.75} />
              </button>
            );
          const [label, glyph] = tool;
          return (
            <button
              key={i}
              aria-label={label}
              className={`flex h-5 items-center justify-center ${label === "着色" ? "mx-[3px] w-5 border border-[#5fae9f] bg-[#c2ddd7]" : "w-[26px]"}`}
            >
              <Small className="size-[17px]">{glyph}</Small>
            </button>
          );
        })}
        <button aria-label="更多" className="flex w-[26px] justify-center">
          <ChevronsUp className="size-4 text-[#555]" />
        </button>
        <span className="mx-1 h-5 w-px bg-[#d5d5d5]" />
        <button aria-label="缩小" className="flex w-[26px] justify-center">
          <Minus className="size-3 text-[#999]" />
        </button>
        <input
          type="range"
          aria-label="缩放"
          value={zoom}
          onChange={(e) => setZoom(e.target.value)}
          className="h-4 w-[60px] appearance-none bg-transparent [&::-webkit-slider-runnable-track]:h-px [&::-webkit-slider-runnable-track]:bg-[#aaa] [&::-webkit-slider-thumb]:-mt-2 [&::-webkit-slider-thumb]:h-4 [&::-webkit-slider-thumb]:w-1 [&::-webkit-slider-thumb]:appearance-none [&::-webkit-slider-thumb]:border [&::-webkit-slider-thumb]:border-[#999] [&::-webkit-slider-thumb]:bg-[#f0f0f0]"
        />
        <button aria-label="放大" className="flex w-[26px] justify-center">
          <Plus className="size-3 text-[#999]" />
        </button>
      </div>
      <output className="pb-1 pl-6 text-[13px] text-[#555]">22843.84 , 37070.05 , 0.00</output>
      <div className="flex items-center justify-end gap-1 pr-[7px]">
        <button aria-label="对象捕捉" className="flex h-5 items-center border border-[#5fae9f] bg-[#c2ddd7]">
          <Small className="size-[18px]">
            <path d="M10 12H36V38H10ZM6 8H14V16H6ZM32 34H42V42H32Z" />
          </Small>
        </button>
        <svg viewBox="0 0 6 4" className="-ml-0.5 h-[3px] w-[5px]">
          <path d="M0 0H6L3 4Z" fill={INK} />
        </svg>
        <button aria-label="极轴" className="flex size-5 items-center justify-center border border-[#5fae9f] bg-[#c2ddd7]">
          <Small>
            <path d="M4 44L44 4M4 44H44M26 22L30 30" />
          </Small>
        </button>
        <button aria-label="追踪" className="ml-1 flex size-5 items-center justify-center border border-[#5fae9f] bg-[#c2ddd7]">
          <Small>
            <path d="M6 4L20 42H46M6 4V44" strokeDasharray="10 3" />
          </Small>
        </button>
        {snapTools.map(([label, glyph]) => (
          <button key={label} aria-label={label} className="flex w-[22px] justify-center">
            <Small className="size-[17px]">{glyph}</Small>
          </button>
        ))}
        <button aria-label="设置" className="flex w-[22px] justify-center">
          <Settings className="size-4 text-[#444]" strokeWidth={1.75} />
        </button>
      </div>
    </footer>
  );
};

const App = () => {
  return (
    <div className="flex h-screen flex-col overflow-hidden bg-[#f0f0f0] font-['Open_Sans','Noto_Sans_CJK_SC',sans-serif] text-xs text-[#444]">
      <TitleBar />
      <nav className="flex h-[26px] shrink-0 bg-[#d9dbdc]">
        <button className="px-[22px] pt-0.5">开始</button>
        {tabs.map((tab) => (
          <button key={tab} className={`whitespace-nowrap px-[18px] pt-0.5 ${tab === "常用功能" ? "bg-white" : ""}`}>
            {tab}
          </button>
        ))}
      </nav>
      <Ribbon />
      <div className="flex min-h-0 flex-1">
        <Browser />
        <main className="flex min-w-0 flex-1 flex-col pl-0.5">
          <div className="grid min-h-0 flex-1 grid-cols-3 gap-px bg-[#eeeeee] pb-1 pr-px">
            <Viewport title="新建视口2" viewBox="327 173 523 798" cube={<FlatCube face="上" />}>
              <PlanDrawing />
            </Viewport>
            <Viewport title="视口0" viewBox="859 173 523 798" cube={<FlatCube face="前" />}>
              <FrontDrawing />
            </Viewport>
            <Viewport title="新建视口1" active viewBox="1391 173 523 798" cube={<IsoCube />}>
              <ModelDrawing />
            </Viewport>
          </div>
          <ToolStrip />
        </main>
      </div>
      <StatusBar />
    </div>
  );
};

export default App;
